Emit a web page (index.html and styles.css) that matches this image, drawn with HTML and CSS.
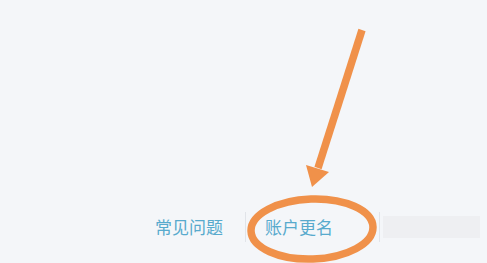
FILE: index.html
```html
<!DOCTYPE html>
<html lang="zh">
<head>
<meta charset="utf-8">
<link rel="stylesheet" href="styles.css">
</head>
<body>
<div class="page">
  <div class="links">
    <span class="link">常见问题</span>
    <span class="sep sep1"></span>
    <span class="link link2">账户更名</span>
    <span class="sep sep2"></span>
    <span class="blur"></span>
  </div>
  <svg class="mark" width="487" height="263" viewBox="0 0 487 263">
    <line x1="362" y1="30" x2="318" y2="168" stroke="#f0914a" stroke-width="7.5" stroke-linecap="butt"/>
    <polygon points="306,165 329,172 312,187" fill="#f0914a"/>
    <ellipse cx="312" cy="229" rx="61" ry="30" fill="none" stroke="#f0914a" stroke-width="7.5" transform="rotate(-2 312 229)"/>
  </svg>
</div>
</body>
</html>
```
FILE: styles.css
```css
html, body {
  margin: 0;
  padding: 0;
  background: #f4f6f9;
}
.page {
  position: relative;
  width: 487px;
  height: 263px;
  overflow: hidden;
  font-family: "Noto Sans CJK SC", "Noto Sans", sans-serif;
}
.links {
  display: flex;
  align-items: center;
  height: 30px;
  padding-top: 212px;
  padding-left: 155px;
}
.link {
  font-size: 17px;
  line-height: 30px;
  color: #58aacd;
}
.sep {
  width: 1px;
  height: 30px;
  background: #e1e4e9;
}
.sep1 { margin-left: 22px; }
.link2 { margin-left: 19px; }
.sep2 { margin-left: 46px; }
.blur {
  margin-left: 3px;
  width: 97px;
  height: 22px;
  background: #eeeff2;
}
.mark {
  position: absolute;
  left: 0;
  top: 0;
}
```
